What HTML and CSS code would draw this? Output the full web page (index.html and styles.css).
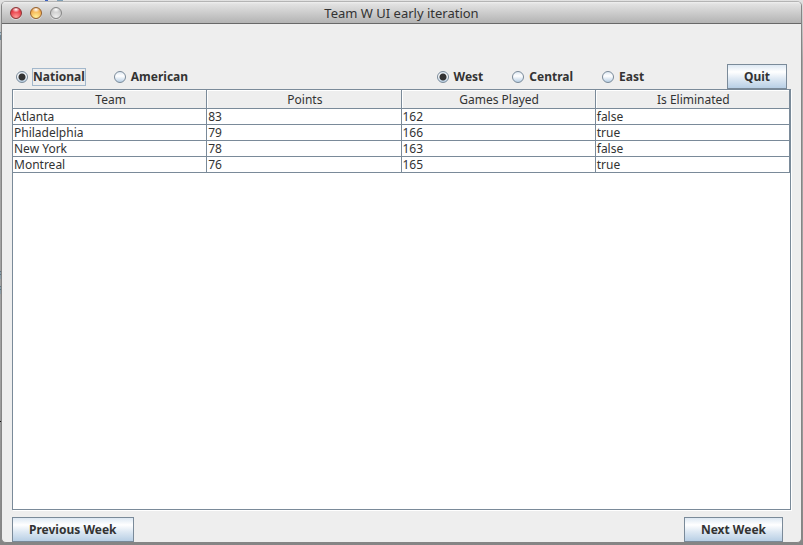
FILE: index.html
```html
<!DOCTYPE html>
<html lang="en">
<head>
<meta charset="utf-8">
<meta name="viewport" content="width=device-width, initial-scale=1">
<title>Team W UI early iteration</title>
<link rel="stylesheet" href="styles.css">
</head>
<body>
<main class="window">
  <header class="titlebar">
    <div class="lights">
      <button class="light red" type="button" aria-label="Close"></button>
      <button class="light amber" type="button" aria-label="Minimize"></button>
      <button class="light grey" type="button" aria-label="Zoom" disabled></button>
    </div>
    <h1 class="title">Team W UI early iteration</h1>
  </header>
  <form class="content">
    <div class="toolbar">
      <div class="group leagues" role="radiogroup" aria-label="League">
        <label class="option"><input type="radio" name="league" checked><span class="caption focused">National</span></label>
        <label class="option"><input type="radio" name="league"><span class="caption">American</span></label>
      </div>
      <div class="group divisions" role="radiogroup" aria-label="Division">
        <label class="option"><input type="radio" name="division" checked><span class="caption">West</span></label>
        <label class="option"><input type="radio" name="division"><span class="caption">Central</span></label>
        <label class="option"><input type="radio" name="division"><span class="caption">East</span></label>
      </div>
      <button class="button" type="button">Quit</button>
    </div>
    <div class="pane">
      <table class="standings">
        <thead>
          <tr><th>Team</th><th>Points</th><th>Games Played</th><th>Is Eliminated</th></tr>
        </thead>
        <tbody>
          <tr><td>Atlanta</td><td>83</td><td>162</td><td>false</td></tr>
          <tr><td>Philadelphia</td><td>79</td><td>166</td><td>true</td></tr>
          <tr><td>New York</td><td>78</td><td>163</td><td>false</td></tr>
          <tr><td>Montreal</td><td>76</td><td>165</td><td>true</td></tr>
        </tbody>
      </table>
    </div>
    <div class="pager">
      <button class="button" type="button">Previous Week</button>
      <button class="button" type="button">Next Week</button>
    </div>
  </form>
</main>
</body>
</html>
```
FILE: styles.css
```css
* { box-sizing: border-box; }

:root {
  --line: #7a8a99;
  --panel: #eeeeee;
  --text: #333333;
}

body {
  margin: 0;
  height: 100vh;
  display: flex;
  padding: 1px 1px 2px;
  background:
    linear-gradient(#3a5fc0, #3a5fc0) 45px 0 / 3px 1px no-repeat,
    linear-gradient(#7f9fb5, #7f9fb5) 57px 0 / 6px 1px no-repeat,
    linear-gradient(#6f8594 1px, #a9bac4 1px 3px, #6f8594 3px) 0 32px / 2px 8px no-repeat,
    linear-gradient(#5f7480 1px, #8a9ca6 1px 3px, #5f7480 3px 4px, #8a9ca6 4px) 0 271px / 2px 8px no-repeat,
    linear-gradient(#5f7480 1px, #8a9ca6 1px 3px, #5f7480 3px 4px, #8a9ca6 4px) 0 286px / 2px 8px no-repeat,
    linear-gradient(#111111, #111111) 0 421px / 2px 1px no-repeat,
    linear-gradient(#e2e2e2 0, #d8d8d8 8px, #a6a6a6 60px, #a0a0a0 70%, #858585 100%);
  color: var(--text);
  font: 12px/16px "Noto Sans", "Open Sans", sans-serif;
}

.window {
  flex: 1;
  display: flex;
  flex-direction: column;
  min-width: 0;
  border: 1px solid #858585;
  border-top-color: #b4b4b4;
  border-radius: 5px;
  background: var(--panel);
  overflow: hidden;
}

.titlebar {
  display: grid;
  grid-template-columns: 1fr auto 1fr;
  align-items: center;
  height: 22px;
  padding: 0 8px;
  background: linear-gradient(#f0f0f0 0, #e2e2e2 2px, #b3b3b3 100%);
  border-bottom: 1px solid #686868;
}

.lights { display: flex; gap: 8px; }

.light {
  width: 12px;
  height: 12px;
  padding: 0;
  border: 1px solid;
  border-radius: 50%;
  box-shadow: 0 1px 0 #dddddd;
}

.red {
  border-color: #8c3535;
  background: radial-gradient(ellipse 4px 3px at 50% 15%, #ffffff, transparent), radial-gradient(circle at 50% 90%, #ff9d98, #e9404a 60%, #c22b35);
}

.amber {
  border-color: #95602d;
  background: radial-gradient(ellipse 4px 3px at 50% 15%, #ffffff, transparent), radial-gradient(circle at 50% 90%, #fff29a, #f5b455 60%, #cb7a2d);
}

.grey {
  border-color: #868686;
  background: radial-gradient(ellipse 4px 3px at 50% 15%, #ffffff, transparent), radial-gradient(circle at 50% 90%, #eeeeee, #cccccc 60%, #b0b0b0);
}

.title {
  margin: 0;
  font-size: 13px;
  font-weight: 400;
  line-height: 20px;
}

.content {
  flex: 1;
  display: flex;
  flex-direction: column;
  padding: 40px 10px 0;
  min-height: 0;
}

.toolbar {
  display: grid;
  grid-template-columns: 420fr 290fr auto;
  align-items: center;
  padding: 0 4px;
}

.group { display: flex; gap: 28px; }

.option {
  display: flex;
  align-items: center;
  gap: 4px;
  font-weight: 700;
}

.caption { border: 1px solid transparent; }
.focused { border-color: #a3b8cc; }

.option input {
  appearance: none;
  width: 12px;
  height: 12px;
  margin: 0;
  border: 1px solid var(--line);
  border-radius: 50%;
  background: linear-gradient(#dde8f3, #ffffff 40%, #b8cfe5);
}

.option input:checked {
  background: radial-gradient(circle, #333333 3px, transparent 4px), linear-gradient(#dde8f3, #ffffff 40%, #b8cfe5);
}

.button {
  height: 25px;
  padding: 0 16px;
  border: 1px solid var(--line);
  border-radius: 0;
  background: linear-gradient(#dde8f3, #ffffff 30%, #dde8f3 60%, #b8cfe5);
  color: var(--text);
  font: inherit;
  font-weight: 700;
}

.pane {
  flex: 1;
  min-height: 0;
  border: 1px solid var(--line);
  background: #ffffff;
  box-shadow: 1px 1px 0 #ffffff;
}

.standings {
  width: 100%;
  table-layout: fixed;
  border-collapse: separate;
  border-spacing: 0;
}

.standings th,
.standings td {
  padding: 0 1px;
  border-right: 1px solid var(--line);
  border-bottom: 1px solid var(--line);
  line-height: 15px;
  text-align: left;
}

.standings th {
  padding: 2px 0 0 2px;
  background: var(--panel);
  box-shadow: inset 1px 1px 0 #ffffff;
  font-weight: 400;
  line-height: 16px;
  text-align: center;
}

.pager {
  display: flex;
  justify-content: space-between;
  padding: 7px 8px 0 0;
}
```
